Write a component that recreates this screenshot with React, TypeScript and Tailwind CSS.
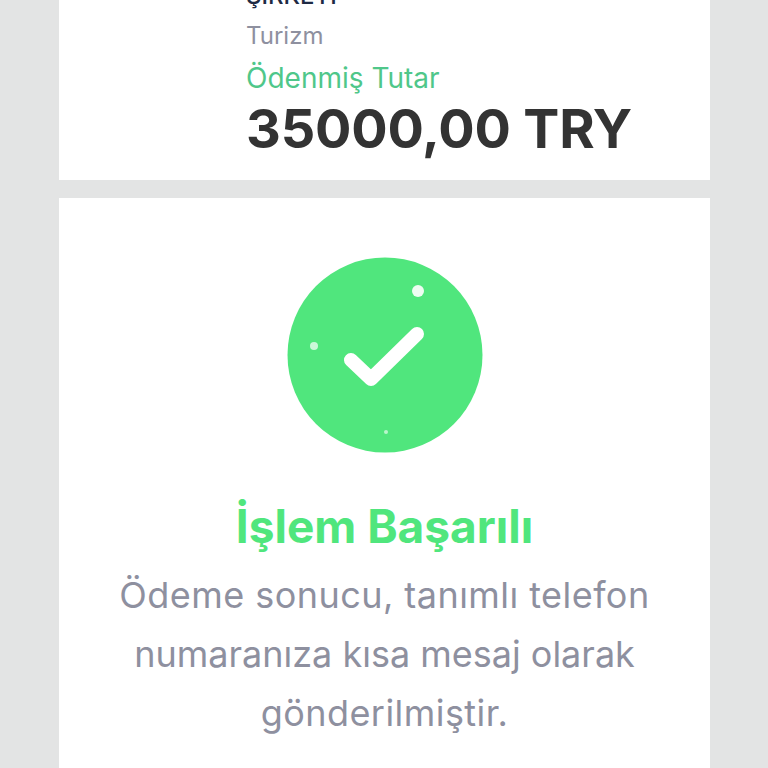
export default function App() {
  return (
    <div className="h-[768px] overflow-hidden bg-[#e3e4e4] pl-[59px] pr-[58px] flex flex-col gap-[18px] font-['Inter',sans-serif] w-[768px]">
      <div className="h-[180px] shrink-0 bg-white flex flex-col justify-end overflow-hidden pl-[187px] pb-[19px]">
        <div className="text-[#1e2a44] text-[24px] leading-[34px] font-medium">ŞİRKETİ</div>
        <div className="text-[#8e909f] text-[24px] leading-[46px]">Turizm</div>
        <div className="text-[#4fc78a] text-[28px] leading-[38px]">Ödenmiş Tutar</div>
        <div className="text-[#333333] text-[54px] leading-[64px] font-bold tracking-[-0.2px]">35000,00 TRY</div>
      </div>
      <div className="flex-1 bg-white flex flex-col items-center pt-[59px]">
        <svg width="196" height="196" viewBox="0 0 196 196" className="shrink-0">
          <circle cx="98" cy="98" r="97.5" fill="#50e67d" />
          <circle cx="131" cy="34" r="6" fill="#ffffff" fillOpacity="0.9" />
          <circle cx="27" cy="89" r="4" fill="#ffffff" fillOpacity="0.7" />
          <circle cx="99" cy="175" r="2" fill="#ffffff" fillOpacity="0.6" />
          <path d="M64 103 L84 122 L130 77" fill="none" stroke="#ffffff" strokeWidth="14" strokeLinecap="round" strokeLinejoin="round" />
        </svg>
        <div className="mt-[40px] text-[#50e67d] text-[46px] leading-[66px] font-bold">İşlem Başarılı</div>
        <div className="mt-[7px] text-[#8e909f] text-[36px] leading-[59px] text-center">
          <div className="tracking-[0.45px]">Ödeme sonucu, tanımlı telefon</div>
          <div>numaranıza kısa mesaj olarak</div>
          <div className="tracking-[0.45px]">gönderilmiştir.</div>
        </div>
      </div>
    </div>
  );
}
